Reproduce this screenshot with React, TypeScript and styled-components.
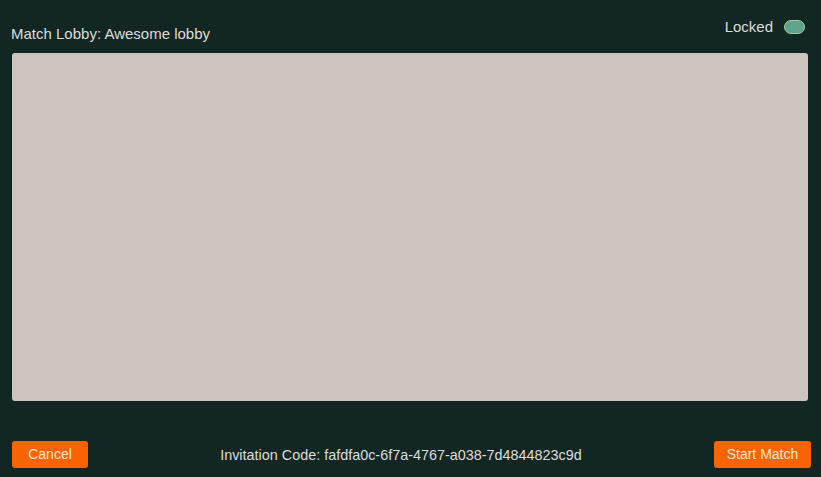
import React from "react";
import styled, { createGlobalStyle } from "styled-components";

const Global = createGlobalStyle`
  html, body { margin: 0; padding: 0; background: #122723; }
  body { font-family: "Liberation Sans", Arial, sans-serif; }
`;

const Screen = styled.div`
  width: 821px;
  height: 477px;
  background: #122723;
  display: flex;
  flex-direction: column;
  box-sizing: border-box;
  color: #dcdcdc;
  font-size: 14px;
  line-height: 16px;
`;

const Header = styled.div`
  height: 53px;
  display: flex;
  justify-content: space-between;
  align-items: flex-start;
  padding: 0 16px 0 11px;
  box-sizing: border-box;
`;

const Title = styled.div`
  padding-top: 25px;
  font-size: 15px;
  line-height: 17px;
`;

const LockGroup = styled.div`
  padding-top: 19px;
  display: flex;
  align-items: center;
  gap: 11px;
  font-size: 15px;
`;

const Toggle = styled.div<{ $on: boolean }>`
  width: 21px;
  height: 14px;
  box-sizing: border-box;
  border-radius: 7px;
  border: 1.5px solid #a3cc9c;
  background: ${(p) => (p.$on ? "#5ea48a" : "#3a4a45")};
`;

const Panel = styled.div`
  margin: 0 13px 0 12px;
  height: 348px;
  background: #cdc4bf;
  border-radius: 3px;
`;

const Footer = styled.div`
  flex: 1;
  display: flex;
  justify-content: space-between;
  align-items: center;
  padding: 39px 10px 9px 12px;
  box-sizing: border-box;
`;

const Button = styled.button<{ $w: number }>`
  width: ${(p) => p.$w}px;
  height: 27px;
  border: none;
  border-radius: 3px;
  background: #f96400;
  color: #fde6d6;
  font-family: "Liberation Sans", Arial, sans-serif;
  font-size: 14px;
  padding: 0;
  cursor: pointer;
`;

const Code = styled.div`
  padding-top: 1px;
  font-size: 14.4px;
`;

export default function App() {
  return (
    <>
      <Global />
      <Screen>
        <Header>
          <Title>Match Lobby: Awesome lobby</Title>
          <LockGroup>
            <span>Locked</span>
            <Toggle $on={true} />
          </LockGroup>
        </Header>
        <Panel />
        <Footer>
          <Button $w={76}>Cancel</Button>
          <Code>Invitation Code: fafdfa0c-6f7a-4767-a038-7d4844823c9d</Code>
          <Button $w={97}>Start Match</Button>
        </Footer>
      </Screen>
    </>
  );
}
